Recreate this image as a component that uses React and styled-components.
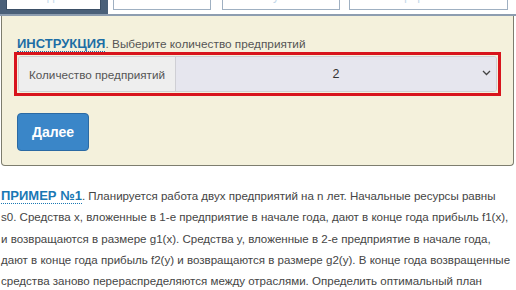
import styled, { createGlobalStyle } from "styled-components";

const Global = createGlobalStyle`
  body {
    margin: 0;
    background: #fff;
    font-family: "Liberation Sans", Arial, sans-serif;
    overflow: hidden;
  }
`;

const Page = styled.div`
  width: 516px;
`;

const TabsBar = styled.div`
  display: flex;
  align-items: flex-end;
  margin-top: -22px;
  border-bottom: 2px solid #8d9db0;
  height: 36px;
`;

const TabWrap = styled.div`
  display: flex;
  height: 36px;
  box-sizing: border-box;
  padding: ${({ $active }) => ($active ? "0 7px 4px 6px" : "0")};
  background: ${({ $active }) => ($active ? "#4a6079" : "transparent")};
  margin-left: ${({ $gap }) => $gap}px;
`;

const Tab = styled.div`
  width: ${({ $w }) => $w}px;
  height: 32px;
  box-sizing: border-box;
  background: #fff;
  border: 1px solid ${({ $active }) => ($active ? "#3b4f66" : "#9fb0c2")};
  color: #c3d8ea;
  font-size: 12px;
  line-height: 14px;
  display: flex;
  align-items: flex-start;
  justify-content: center;
  padding-top: 10px;
`;

const Panel = styled.div`
  margin: 0 2px 0 1px;
  height: 150px;
  box-sizing: border-box;
  background: #f4f1dc;
  border: 1px solid #7d7d6e;
  border-top: none;
  border-radius: 0 0 4px 4px;
  padding: 21px 13px 0 12px;
`;

const Instruction = styled.div`
  font-size: 11.8px;
  color: #555;
  margin-left: 3px;
  line-height: 14px;
`;

const Label = styled.span`
  font-weight: bold;
  font-size: 13px;
  color: #1d6ea5;
  border-bottom: 1px dotted #1d6ea5;
`;

const Highlight = styled.div`
  margin-top: 1px;
  border: 3px solid #d8141c;
  padding: 1px;
  width: 487px;
  box-sizing: border-box;
`;

const InputGroup = styled.div`
  display: flex;
  height: 34px;
  border: 1px solid #cfcfd4;
  border-radius: 3px;
  overflow: hidden;
`;

const Addon = styled.div`
  width: 157px;
  background: #eeeeee;
  border-right: 1px solid #cfcfd4;
  color: #555;
  font-size: 11.7px;
  display: flex;
  align-items: center;
  padding-left: 10px;
  box-sizing: border-box;
`;

const Select = styled.div`
  flex: 1;
  background: #e6e6ee;
  display: flex;
  align-items: center;
  justify-content: center;
  position: relative;
  font-size: 12.5px;
  color: #333;
`;

const Chevron = styled.svg`
  position: absolute;
  right: 5px;
  top: 13px;
`;

const Button = styled.button`
  margin: 17px 0 0 3px;
  width: 72px;
  height: 38px;
  background: #3a86c8;
  border: 1px solid #2b6aa3;
  border-radius: 4px;
  color: #fff;
  font-family: "Liberation Sans", Arial, sans-serif;
  font-weight: bold;
  font-size: 14px;
  padding: 0;
`;

const Text = styled.p`
  margin: 20px 0 0 1px;
  font-size: 11.55px;
  line-height: 21.3px;
  color: #454545;
  white-space: nowrap;
`;

const Example = styled.span`
  font-weight: bold;
  font-size: 13px;
  line-height: 15px;
  color: #1a78b4;
  border-bottom: 1px dotted #1a78b4;
`;

const tabs = [
  { w: 95, gap: 0, active: true, title: "Задача" },
  { w: 98, gap: 5, title: "Решение" },
  { w: 118, gap: 11, title: "Результат" },
  { w: 159, gap: 9, title: "Оформление" },
];

export default function App() {
  return (
    <Page>
      <Global />
      <TabsBar>
        {tabs.map((t) => (
          <TabWrap key={t.title} $active={t.active} $gap={t.gap}>
            <Tab $w={t.w} $active={t.active}>{t.title}</Tab>
          </TabWrap>
        ))}
      </TabsBar>
      <Panel>
        <Instruction>
          <Label>ИНСТРУКЦИЯ</Label>. Выберите количество предприятий
        </Instruction>
        <Highlight>
          <InputGroup>
            <Addon>Количество предприятий</Addon>
            <Select>
              2
              <Chevron width="9" height="6" viewBox="0 0 9 6">
                <path d="M1 1l3.5 3.5L8 1" fill="none" stroke="#444" strokeWidth="1.3" />
              </Chevron>
            </Select>
          </InputGroup>
        </Highlight>
        <Button>Далее</Button>
      </Panel>
      <Text>
        <Example>ПРИМЕР №1</Example>. Планируется работа двух предприятий на n лет. Начальные ресурсы равны
        <br />
        s0. Средства x, вложенные в 1-е предприятие в начале года, дают в конце года прибыль f1(x),
        <br />
        и возвращаются в размере g1(x). Средства y, вложенные в 2-е предприятие в начале года,
        <br />
        дают в конце года прибыль f2(y) и возвращаются в размере g2(y). В конце года возвращенные
        <br />
        средства заново перераспределяются между отраслями. Определить оптимальный план
        <br />
        распределения средств.
      </Text>
    </Page>
  );
}
